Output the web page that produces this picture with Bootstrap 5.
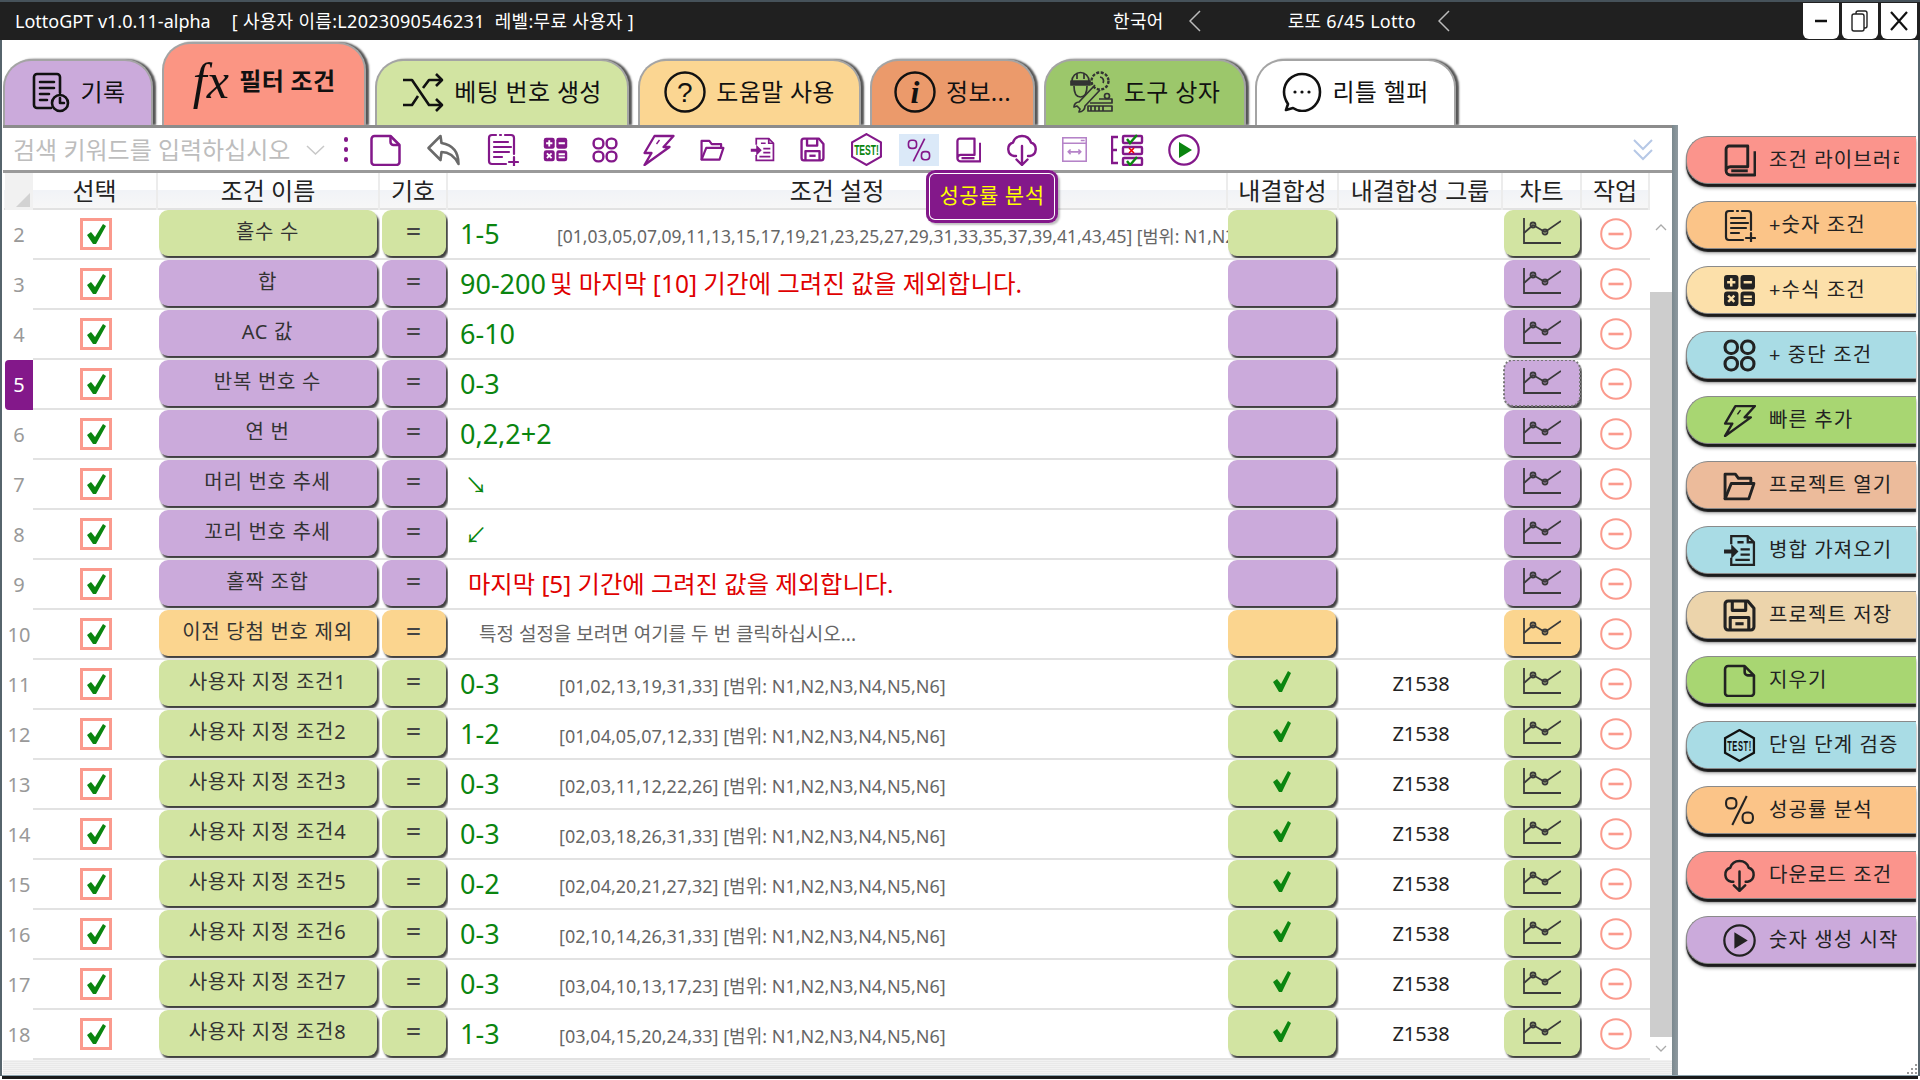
<!doctype html>
<html lang="ko">
<head>
<meta charset="utf-8">
<title>LottoGPT</title>
<link href="https://cdn.jsdelivr.net/npm/bootstrap@5.3.0/dist/css/bootstrap.min.css" rel="stylesheet">
<style>
html,body{margin:0;height:1080px;overflow:hidden;background:#fff}
body{font-family:"Noto Sans","Noto Sans CJK KR",sans-serif;color:#222;width:1920px}
.winbar{height:40px;background:#202020;border-top:2px solid #46525a;color:#fff;font-size:18px;padding-left:15px}
.winbar .vt{margin-left:21px;letter-spacing:.3px}
.lang1{margin-left:479px;letter-spacing:.3px}
.chev1{margin-left:25px}
.lang2{margin-left:87px;letter-spacing:.3px}
.chev2{margin-left:22px}
.winbtns{margin-left:auto;padding-right:3px;gap:3px;align-self:flex-start;margin-top:1px}
.wbtn{width:36px;height:36px;background:#fff;border:0;border-radius:0 0 6px 6px;padding:0;color:#111;display:flex;align-items:center;justify-content:center}
.bodyarea{height:1036px;border-left:2px solid #56646c;border-right:2px solid #56646c}
.tabstrip{height:85px;padding-left:1px;gap:9px;align-items:flex-end;overflow:hidden}
.tabx{height:66px;border-radius:28px 28px 0 0;border:2px solid #a4a4a4;border-bottom:0;box-shadow:3px 0 2px #555;color:#111;font-size:24px;letter-spacing:.3px;padding:0 0 2px;gap:10px;display:flex;align-items:center;justify-content:center}
.tabx svg{flex:none}
.t1{width:150px;background:#cbaadb}
.t2{width:204px;height:83px;background:#fb9583;font-weight:700;padding:0 0 7px;gap:10px}
.t3{width:254px;background:#d2e4a2}
.t4{width:223px;background:#fbd692}
.t5{width:165px;background:#eb9a6b}
.t6{width:202px;background:#9cc76b}
.t7{width:201px;background:#fff}
.fxmark{font-family:"Liberation Serif",serif;font-style:italic;font-weight:400;font-size:50px;line-height:1}
.workarea{height:950px;margin-left:1px}
.mainpane{width:1669px;flex:none}
.toolrow{height:48px;border-top:3px solid #8c8c8c;border-bottom:3px solid #9a9a9a;padding:1px 0 0 10px;color:#83188a;--hole:#fff;background:#fff}
.srch{width:281px;overflow:hidden;white-space:nowrap;font-size:24px;color:#bdbdbd}
.srchchev{margin-left:12px}
.kebab{margin-left:19px;margin-right:21px;width:4px;gap:5px}
.kebab i{display:block;width:4px;height:5px;border-radius:2px;background:#83188a}
.toolset{gap:24.3px}
.toolset svg{display:block;flex:none}
.pctwrap{position:relative;width:40px;height:32px;margin:0 -8px;background:#dbe9f8;display:flex;align-items:center;justify-content:center}
.hint-pop{position:absolute;left:27px;top:36px;width:132px;height:53px;background:#83188a;border-radius:9px;box-shadow:inset 0 0 0 3px #83188a,inset 0 0 0 4px #fff,2px 2px 2px rgba(0,0,0,.25);color:#ff0;font-size:21px;display:flex;align-items:center;justify-content:center;white-space:nowrap;z-index:5;letter-spacing:.5px}
.morechev{margin-left:auto;margin-right:18px}
.midarea{height:887px;padding-left:1px}
.gridbox{width:1646px;flex:none}
.grow,.ghead{display:grid;grid-template-columns:29px 125px 222px 68px 780px 111px 164px 79px 68px}
.ghead{height:37px;background:linear-gradient(#fff 0,#fff 48%,#f1f3f7 50%,#f7f7f7 100%);border-bottom:2px solid #e2e2e2;font-size:24px;color:#222}
.ghead>div{display:flex;align-items:center;justify-content:center;border-right:2px solid #ececec;padding-bottom:1px;white-space:nowrap}
.ghead .corner{background:#f1f1f1;align-items:flex-end;justify-content:flex-end;padding:0 3px 3px 0;border-right:0;margin-left:1px}
.grow{height:50px}
.grow>div{display:flex;align-items:center;justify-content:center;overflow:hidden;border-bottom:2px solid #e2e2e2}
.grow>.rnum{border-bottom:0;color:#999;font-size:20px;margin:0 0 0 1px;padding-left:0}
.grow>.rnum.hot{background:#83188a;color:#fff;border-radius:4px 0 0 4px;font-size:20px;margin-bottom:0}
.cbtn{border:0;border-radius:9px;padding:0 0 2px;height:46px;font-size:20px;color:#333;box-shadow:2px 3px 2px rgba(30,30,30,.85);background:var(--tone);white-space:nowrap;display:flex;align-items:center;justify-content:center;margin-bottom:3px;letter-spacing:.7px;flex:none}
.cbtn:hover{background:var(--tone);color:#333}
.tg{--tone:#d2e4a2}
.tp{--tone:#cbaadb}
.ty{--tone:#fbd58f}
.namebtn{width:218px;margin-right:3px}
.symbtn{width:64px;font-size:27px;color:#444;letter-spacing:0;margin-left:1px;margin-right:2px}
.fitbtn{width:108px;margin-right:4px;padding-bottom:4px}
.chartbtn{width:76px;padding:0 0 3px;margin-right:2px}
.chartbtn.focusdot{outline:2px dotted #777;outline-offset:-1px}
.grow>.valcell{justify-content:flex-start;padding:0 0 0 12px;white-space:nowrap;font-size:27px;color:#0a850f}
.vnum{width:97px;flex:none}
.vnum2{width:99px;flex:none}
.vdet{font-size:18px;color:#666;letter-spacing:0;padding-top:5px}
.vdet2{font-size:17.5px}
.vred{color:#e00000;font-size:24.5px;padding-left:4px}
.vred9{padding-left:8px;font-size:24.3px}
.vgray{padding-left:19px;font-size:19px;color:#666}
.varrow{padding-left:5px;font-size:22px}
.grpcell{font-size:20px;color:#222}
.sbar{width:22px;flex:none;padding-top:37px}
.sbtop{height:82px;padding-top:14px;text-align:center;color:#aaa}
.sbthumb{height:745px;background:#cdcdcd}
.sbbot{height:23px;text-align:center}
.footstrip{height:15px;background:repeating-linear-gradient(#f2f2f2 0,#f2f2f2 1px,#e9e9e9 1px,#e9e9e9 2px)}
.splitbar{width:6px;flex:none;background:linear-gradient(90deg,#7a888e,#8f9aa0)}
.rightpane{flex:1 1 auto;padding:11px 0 0 8px;gap:17px;overflow:hidden;background:#fff;position:relative}
.rbtn{width:230px;height:48px;border:1px solid #8a8a8a;border-right:0;border-radius:22px 0 0 22px;box-shadow:0 3px 1px #1c1c1c,0 5px 3px rgba(0,0,0,.25);padding:0 0 0 36px;font-size:20px;color:#222;display:flex;align-items:center;justify-content:flex-start;gap:13px;letter-spacing:1.1px;background:var(--tone);white-space:nowrap;text-align:left;flex:none}
.rbtn:hover{background:var(--tone);color:#222}
.rbtn svg{flex:none}
.rlabel{width:130px;overflow:hidden;display:block}
.rred{--tone:#fb948c;--hole:#fb948c}
.rora{--tone:#fbc488;--hole:#fbc488}
.ryel{--tone:#fce0aa;--hole:#fce0aa}
.rblu{--tone:#a9dce5;--hole:#a9dce5}
.rgrn{--tone:#a8d672;--hole:#a8d672}
.rsal{--tone:#ecbb9b;--hole:#ecbb9b}
.rtan{--tone:#ecd4ab;--hole:#ecd4ab}
.rpur{--tone:#cbaadb;--hole:#cbaadb}
.botline{height:1px;background:#8aa2ad}
.botdark{height:3px;background:#1a1a1a}
.grip{position:absolute;right:0;bottom:0;width:12px;height:12px}
svg text{font-family:"Liberation Sans",sans-serif}
</style>
</head>
<body>
<svg width="0" height="0" class="position-absolute">
<defs>
<symbol id="i-doc" viewBox="0 0 32 32"><g fill="none" stroke="currentColor" stroke-width="2.5" stroke-linejoin="round"><path d="M2 5a3 3 0 0 1 3-3h16l9 9v17a3 3 0 0 1-3 3H5a3 3 0 0 1-3-3z"/><path d="M21 2v6a3 3 0 0 0 3 3h6"/></g></symbol>
<symbol id="i-reply" viewBox="0 0 34 32"><path d="M14 2 2 14l12 12 1-8c7 0 13 4 17 12 0-11-5-19-17-21z" fill="none" stroke="#6a6a6a" stroke-width="2.600" stroke-linejoin="round"/></symbol>
<symbol id="i-numdoc" viewBox="0 0 33 33"><g fill="none" stroke="currentColor" stroke-width="2.2" stroke-linecap="round"><path d="M10 2H6a3 3 0 0 0-3 3v23a3 3 0 0 0 3 3h14"/><path d="M14 2h1M19 2h6a3 3 0 0 1 3 3v16"/><path d="M8 9h14M8 14h17M8 19h15M8 24h8"/><path d="M28 24v9M23 29h9"/></g></symbol>
<symbol id="i-calc" viewBox="0 0 32 32"><g fill="currentColor"><rect x="1" y="1" width="14" height="14" rx="3"/><rect x="17" y="1" width="14" height="14" rx="3"/><rect x="1" y="17" width="14" height="14" rx="3"/><rect x="17" y="17" width="14" height="14" rx="3"/></g><g stroke="var(--hole,#fff)" stroke-width="2.4" fill="none"><path d="M8 4v8M4 8h8M20 8h8M5 21l6 6M11 21l-6 6M20 22h8M20 26h8"/></g></symbol>
<symbol id="i-four" viewBox="0 0 32 32"><g fill="none" stroke="currentColor" stroke-width="3"><rect x="2" y="2" width="12" height="12" rx="5.5"/><rect x="18" y="2" width="12" height="12" rx="5.5"/><rect x="2" y="18" width="12" height="12" rx="5.5"/><rect x="18" y="18" width="12" height="12" rx="5.5"/></g></symbol>
<symbol id="i-bolt" viewBox="0 0 32 32"><g fill="none" stroke="currentColor" stroke-width="2.3" stroke-linejoin="round"><path d="M12 2h19L21 13h6L2 31l7-12H2z"/><path d="M14 10l3-4" stroke-width="1.4"/></g></symbol>
<symbol id="i-folder" viewBox="0 0 32 32"><g fill="none" stroke="currentColor" stroke-width="2.8" stroke-linejoin="round"><path d="M2 29V5h10l3 4h12v5"/><path d="M2 29h23l5-15H8z"/></g></symbol>
<symbol id="i-import" viewBox="0 0 32 32"><g fill="none" stroke="currentColor" stroke-width="2.2"><path d="M8 10V2h16l6 6v22H8v-7"/><path d="M24 2v6h6M14 8h6M17 15h9M17 20h9M12 25h14"/></g><path d="M1 15h7v-5l7 7-7 7v-5H1z" fill="currentColor"/></symbol>
<symbol id="i-floppy" viewBox="0 0 32 32"><g fill="none" stroke="currentColor" stroke-width="3" stroke-linejoin="round"><path d="M2 5a3 3 0 0 1 3-3h19l6 7v18a3 3 0 0 1-3 3H5a3 3 0 0 1-3-3z"/><path d="M9 2v9h13V2M7 30V18h18v12"/><path d="M12 24h8"/></g></symbol>
<symbol id="i-pct" viewBox="0 0 32 32"><g fill="none" stroke="currentColor" stroke-width="2"><rect x="3" y="4" width="10" height="10" rx="4"/><rect x="19" y="18" width="10" height="10" rx="4"/><path d="M23 2 9 30"/></g></symbol>
<symbol id="i-book" viewBox="0 0 32 32"><g fill="none" stroke="currentColor" stroke-width="2.8" stroke-linejoin="round"><path d="M3 26V5a3 3 0 0 1 3-3h18v20H7a4 4 0 0 0-4 4 4 4 0 0 0 4 4h24V7"/><path d="M8 26h16"/></g></symbol>
<symbol id="i-cloud" viewBox="0 0 32 32"><g fill="none" stroke="currentColor" stroke-width="2.4" stroke-linecap="round" stroke-linejoin="round"><path d="M10 22H8A7 7 0 0 1 7 8.500a9.500 9.500 0 0 1 18 0A7 7 0 0 1 24 22h-2"/><path d="M16 12v19M10.500 25.500 16 31l5.500-5.500"/></g></symbol>
<symbol id="i-window" viewBox="0 0 32 32"><g fill="none" stroke="#b583c8" stroke-width="2"><rect x="1" y="1" width="30" height="30"/><path d="M1 8h30M24 4.500h5M8 19h16M11 16l-3 3 3 3M21 16l3 3-3 3"/></g></symbol>
<symbol id="i-check" viewBox="0 0 33 32"><g fill="none" stroke="#83188a" stroke-width="2.4"><path d="M7 3H1v26h6M1 16h5"/><rect x="12" y="2" width="19" height="7" rx="1"/><rect x="12" y="13" width="19" height="7" rx="1"/><rect x="12" y="24" width="19" height="7" rx="1"/></g><path d="M16 5l3 4 7-8" fill="none" stroke="#0a850f" stroke-width="2.4"/><path d="M18 14l5 5M23 14l-5 5" stroke="#e00" stroke-width="1.6"/><path d="M16 27l3 4 7-8" fill="none" stroke="#0a850f" stroke-width="2.4"/></symbol>
<symbol id="i-play" viewBox="0 0 32 32"><circle cx="16" cy="16" r="14.700" fill="none" stroke="currentColor" stroke-width="2.2"/><path d="M11 8v16l13-8z" fill="var(--playc,currentColor)"/></symbol>
<symbol id="i-hist" viewBox="0 0 40 41"><g fill="none" stroke="currentColor" stroke-width="2.6" stroke-linecap="round" stroke-linejoin="round"><path d="M20 36H6a3 3 0 0 1-3-3V5a3 3 0 0 1 3-3h20a3 3 0 0 1 3 3v16"/><path d="M9 10h14M9 16h14M9 22h9M9 28h7"/><circle cx="29" cy="31" r="8"/><path d="M29 26v5h4"/></g></symbol>
<symbol id="i-shuf" viewBox="0 0 42 40"><g fill="none" stroke="currentColor" stroke-width="2.6" stroke-linejoin="round"><path d="M1 8h9l17 25h12"/><path d="M1 33h9l6-9M21 16l6-8h12"/><path d="M34 2l6 6-6 6M34 27l6 6-6 6"/></g></symbol>
<symbol id="i-tools" viewBox="0 0 44 42"><g fill="none" stroke="#333" stroke-width="1.700" stroke-linejoin="round"><path d="M2 10a8.500 8.500 0 0 1 17 0"/><path d="M1 10h19v4H1z" fill="#333"/><path d="M7 2v6M14 2v6"/><path d="M4 15c0 8 3 11 6.500 11s6.500-3 6.500-11"/><circle cx="30" cy="10" r="8.500" stroke-dasharray="3 1.500" stroke-width="2.400"/><path d="M25 14 9 31a5 5 0 0 0-5 5l3-1 3 3-1 3a6 6 0 0 0 6-6l15-16"/><path d="M30 6a4 4 0 0 1 3 6"/><circle cx="37" cy="25" r="2.500"/><path d="M29 28h13v4H20"/><path d="M18 35h24v5H18zM21 35v5M25 35v5M29 35v5M33 35v5"/></g></symbol>
<symbol id="i-chat" viewBox="0 0 40 40"><path d="M20 2C10 2 2 10 2 20c0 5 2 9 4 12l-2 6 7-2c3 2 6 3 9 3 10 0 18-8 18-19S30 2 20 2z" fill="none" stroke="currentColor" stroke-width="2.600" stroke-linejoin="round"/><g fill="currentColor"><circle cx="13" cy="20" r="1.600"/><circle cx="20" cy="20" r="1.600"/><circle cx="27" cy="20" r="1.600"/></g></symbol>
<symbol id="i-chart" viewBox="0 0 38 26"><g fill="none" stroke="#3a3a3a" stroke-width="1.800"><path d="M1 0v25h37"/><path d="M1 15 10 7 22 14 38 3"/><circle cx="10" cy="7" r="2.500"/><circle cx="22" cy="14" r="2.500"/></g></symbol>
<symbol id="i-minus" viewBox="0 0 32 32"><circle cx="16" cy="16" r="14.800" fill="#fff" stroke="#fb9a8d" stroke-width="2"/><path d="M8.500 16h15" stroke="#fb9a8d" stroke-width="2.600"/></symbol>
<symbol id="i-chk" viewBox="0 0 32 32"><rect x="1.500" y="1.500" width="29" height="29" fill="#fff" stroke="#fb9a8d" stroke-width="3"/><path d="M7 17l4-3 4 5L23 6l3 2-10 18h-3z" fill="#0a850f"/></symbol>
<symbol id="i-ok" viewBox="0 0 24 24"><path d="M3 13l4-3 4 5L18 2l3 2-9 19H9z" fill="#0a850f"/></symbol>
<symbol id="i-chev" viewBox="0 0 12 22"><path d="M11 1 1 11l10 10" fill="none" stroke="#bbb" stroke-width="1.500"/></symbol>
</defs>
</svg>

<header class="winbar d-flex align-items-center">
<span>LottoGPT v1.0.11-alpha</span><span class="vt">[ 사용자 이름:L2023090546231&nbsp; 레벨:무료 사용자 ]</span>
<span class="lang1">한국어</span><svg class="chev1" width="12" height="22"><use href="#i-chev"/></svg>
<span class="lang2">로또 6/45 Lotto</span><svg class="chev2" width="12" height="22"><use href="#i-chev"/></svg>
<div class="winbtns d-flex">
<button class="wbtn" aria-label="min"><svg width="14" height="14"><path d="M1 7h12" stroke="#111" stroke-width="2.500"/></svg></button>
<button class="wbtn" aria-label="max"><svg width="20" height="24"><g fill="#fff" stroke="#222" stroke-width="1.400"><rect x="6" y="2" width="11" height="17" rx="2"/><rect x="2" y="5" width="12" height="17" rx="2"/></g></svg></button>
<button class="wbtn" aria-label="close"><svg width="20" height="22"><path d="M2 2l16 18M18 2 2 20" stroke="#111" stroke-width="2.200"/></svg></button>
</div>
</header>

<div class="bodyarea">
<nav class="nav tabstrip d-flex">
<a class="nav-link tabx t1"><svg width="40" height="41"><use href="#i-hist"/></svg><span>기록</span></a>
<a class="nav-link tabx t2"><span class="fxmark">fx</span><span>필터 조건</span></a>
<a class="nav-link tabx t3"><svg width="42" height="40"><use href="#i-shuf"/></svg><span>베팅 번호 생성</span></a>
<a class="nav-link tabx t4"><svg width="42" height="42"><circle cx="21" cy="21" r="19.500" fill="none" stroke="#111" stroke-width="2.400"/><text x="21" y="31" text-anchor="middle" font-size="28" fill="#111">?</text></svg><span>도움말 사용</span></a>
<a class="nav-link tabx t5"><svg width="42" height="42"><circle cx="21" cy="21" r="19.500" fill="none" stroke="#111" stroke-width="2.400"/><text x="21" y="32" text-anchor="middle" font-size="32" fill="#111" font-style="italic" font-weight="700" style="font-family:'Liberation Serif',serif">i</text></svg><span>정보...</span></a>
<a class="nav-link tabx t6"><svg width="44" height="42"><use href="#i-tools"/></svg><span>도구 상자</span></a>
<a class="nav-link tabx t7"><svg width="40" height="40"><use href="#i-chat"/></svg><span>리틀 헬퍼</span></a>
</nav>

<div class="workarea d-flex">
<main class="mainpane">
<div class="toolrow d-flex align-items-center">
<span class="srch">검색 키워드를 입력하십시오</span>
<svg class="srchchev" width="19" height="10"><path d="M1 1l8.500 8L18 1" fill="none" stroke="#c8c8c8" stroke-width="1.500"/></svg>
<span class="kebab d-flex flex-column"><i></i><i></i><i></i></span>
<div class="toolset d-flex align-items-center">
<svg width="33" height="32"><use href="#i-doc"/></svg>
<svg width="35" height="32"><use href="#i-reply"/></svg>
<svg width="33" height="33"><use href="#i-numdoc"/></svg>
<svg width="25" height="25"><use href="#i-calc"/></svg>
<svg width="26" height="26"><use href="#i-four"/></svg>
<svg width="33" height="32"><use href="#i-bolt"/></svg>
<svg width="25" height="25"><use href="#i-folder"/></svg>
<svg width="27" height="25"><use href="#i-import"/></svg>
<svg width="25" height="25"><use href="#i-floppy"/></svg>
<svg width="33" height="33" viewBox="0 0 32 32"><path d="M16 1 30 9v14l-14 8-14-8V9z" fill="none" stroke="#83188a" stroke-width="2"/><text x="16" y="21.500" text-anchor="middle" font-size="14" font-weight="700" fill="#0a850f" textLength="24" lengthAdjust="spacingAndGlyphs">TEST!</text></svg>
<div class="pctwrap"><svg width="26" height="26"><use href="#i-pct"/></svg><div class="hint-pop">성공률 분석</div></div>
<svg width="26" height="26"><use href="#i-book"/></svg>
<svg width="32" height="32"><use href="#i-cloud"/></svg>
<svg width="25" height="25"><use href="#i-window"/></svg>
<svg width="33" height="32"><use href="#i-check"/></svg>
<svg width="32" height="32" style="--playc:#0a850f"><use href="#i-play"/></svg>
</div>
<svg class="morechev" width="22" height="24"><path d="M2 2l9 9 9-9M2 12l9 9 9-9" fill="none" stroke="#b6c8e6" stroke-width="2"/></svg>
</div>

<div class="midarea d-flex">
<div class="gridbox">
<div class="ghead">
<div class="corner"><svg width="14" height="14"><path d="M14 0v14H0z" fill="#d2d2d2"/></svg></div>
<div>선택</div><div>조건 이름</div><div>기호</div><div>조건 설정</div><div>내결합성</div><div>내결합성 그룹</div><div>차트</div><div>작업</div>
</div>

<div class="grow tg"><div class="rnum">2</div><div><svg width="32" height="32"><use href="#i-chk"/></svg></div><div><button class="btn cbtn namebtn">홀수 수</button></div><div><button class="btn cbtn symbtn">=</button></div><div class="valcell"><span class="vnum">1-5</span><span class="vdet vdet2">[01,03,05,07,09,11,13,15,17,19,21,23,25,27,29,31,33,35,37,39,41,43,45] [범위: N1,N2,N3,N4,N5,N6]</span></div><div><button class="btn cbtn fitbtn" aria-label="fit"></button></div><div class="grpcell"></div><div><button class="btn cbtn chartbtn" aria-label="chart"><svg width="38" height="26"><use href="#i-chart"/></svg></button></div><div><svg width="32" height="32"><use href="#i-minus"/></svg></div></div>

<div class="grow tp"><div class="rnum">3</div><div><svg width="32" height="32"><use href="#i-chk"/></svg></div><div><button class="btn cbtn namebtn">합</button></div><div><button class="btn cbtn symbtn">=</button></div><div class="valcell"><span>90-200</span><span class="vred">및 마지막 [10] 기간에 그려진 값을 제외합니다.</span></div><div><button class="btn cbtn fitbtn" aria-label="fit"></button></div><div class="grpcell"></div><div><button class="btn cbtn chartbtn" aria-label="chart"><svg width="38" height="26"><use href="#i-chart"/></svg></button></div><div><svg width="32" height="32"><use href="#i-minus"/></svg></div></div>

<div class="grow tp"><div class="rnum">4</div><div><svg width="32" height="32"><use href="#i-chk"/></svg></div><div><button class="btn cbtn namebtn">AC 값</button></div><div><button class="btn cbtn symbtn">=</button></div><div class="valcell"><span>6-10</span></div><div><button class="btn cbtn fitbtn" aria-label="fit"></button></div><div class="grpcell"></div><div><button class="btn cbtn chartbtn" aria-label="chart"><svg width="38" height="26"><use href="#i-chart"/></svg></button></div><div><svg width="32" height="32"><use href="#i-minus"/></svg></div></div>

<div class="grow tp"><div class="rnum hot">5</div><div><svg width="32" height="32"><use href="#i-chk"/></svg></div><div><button class="btn cbtn namebtn">반복 번호 수</button></div><div><button class="btn cbtn symbtn">=</button></div><div class="valcell"><span>0-3</span></div><div><button class="btn cbtn fitbtn" aria-label="fit"></button></div><div class="grpcell"></div><div><button class="btn cbtn chartbtn focusdot" aria-label="chart"><svg width="38" height="26"><use href="#i-chart"/></svg></button></div><div><svg width="32" height="32"><use href="#i-minus"/></svg></div></div>

<div class="grow tp"><div class="rnum">6</div><div><svg width="32" height="32"><use href="#i-chk"/></svg></div><div><button class="btn cbtn namebtn">연 번</button></div><div><button class="btn cbtn symbtn">=</button></div><div class="valcell"><span>0,2,2+2</span></div><div><button class="btn cbtn fitbtn" aria-label="fit"></button></div><div class="grpcell"></div><div><button class="btn cbtn chartbtn" aria-label="chart"><svg width="38" height="26"><use href="#i-chart"/></svg></button></div><div><svg width="32" height="32"><use href="#i-minus"/></svg></div></div>

<div class="grow tp"><div class="rnum">7</div><div><svg width="32" height="32"><use href="#i-chk"/></svg></div><div><button class="btn cbtn namebtn">머리 번호 추세</button></div><div><button class="btn cbtn symbtn">=</button></div><div class="valcell"><span class="varrow">↘</span></div><div><button class="btn cbtn fitbtn" aria-label="fit"></button></div><div class="grpcell"></div><div><button class="btn cbtn chartbtn" aria-label="chart"><svg width="38" height="26"><use href="#i-chart"/></svg></button></div><div><svg width="32" height="32"><use href="#i-minus"/></svg></div></div>

<div class="grow tp"><div class="rnum">8</div><div><svg width="32" height="32"><use href="#i-chk"/></svg></div><div><button class="btn cbtn namebtn">꼬리 번호 추세</button></div><div><button class="btn cbtn symbtn">=</button></div><div class="valcell"><span class="varrow">↙</span></div><div><button class="btn cbtn fitbtn" aria-label="fit"></button></div><div class="grpcell"></div><div><button class="btn cbtn chartbtn" aria-label="chart"><svg width="38" height="26"><use href="#i-chart"/></svg></button></div><div><svg width="32" height="32"><use href="#i-minus"/></svg></div></div>

<div class="grow tp"><div class="rnum">9</div><div><svg width="32" height="32"><use href="#i-chk"/></svg></div><div><button class="btn cbtn namebtn">홀짝 조합</button></div><div><button class="btn cbtn symbtn">=</button></div><div class="valcell"><span class="vred vred9">마지막 [5] 기간에 그려진 값을 제외합니다.</span></div><div><button class="btn cbtn fitbtn" aria-label="fit"></button></div><div class="grpcell"></div><div><button class="btn cbtn chartbtn" aria-label="chart"><svg width="38" height="26"><use href="#i-chart"/></svg></button></div><div><svg width="32" height="32"><use href="#i-minus"/></svg></div></div>

<div class="grow ty"><div class="rnum">10</div><div><svg width="32" height="32"><use href="#i-chk"/></svg></div><div><button class="btn cbtn namebtn">이전 당첨 번호 제외</button></div><div><button class="btn cbtn symbtn">=</button></div><div class="valcell"><span class="vgray">특정 설정을 보려면 여기를 두 번 클릭하십시오...</span></div><div><button class="btn cbtn fitbtn" aria-label="fit"></button></div><div class="grpcell"></div><div><button class="btn cbtn chartbtn" aria-label="chart"><svg width="38" height="26"><use href="#i-chart"/></svg></button></div><div><svg width="32" height="32"><use href="#i-minus"/></svg></div></div>

<div class="grow tg"><div class="rnum">11</div><div><svg width="32" height="32"><use href="#i-chk"/></svg></div><div><button class="btn cbtn namebtn">사용자 지정 조건1</button></div><div><button class="btn cbtn symbtn">=</button></div><div class="valcell"><span class="vnum2">0-3</span><span class="vdet">[01,02,13,19,31,33] [범위: N1,N2,N3,N4,N5,N6]</span></div><div><button class="btn cbtn fitbtn" aria-label="fit"><svg width="24" height="24"><use href="#i-ok"/></svg></button></div><div class="grpcell">Z1538</div><div><button class="btn cbtn chartbtn" aria-label="chart"><svg width="38" height="26"><use href="#i-chart"/></svg></button></div><div><svg width="32" height="32"><use href="#i-minus"/></svg></div></div>

<div class="grow tg"><div class="rnum">12</div><div><svg width="32" height="32"><use href="#i-chk"/></svg></div><div><button class="btn cbtn namebtn">사용자 지정 조건2</button></div><div><button class="btn cbtn symbtn">=</button></div><div class="valcell"><span class="vnum2">1-2</span><span class="vdet">[01,04,05,07,12,33] [범위: N1,N2,N3,N4,N5,N6]</span></div><div><button class="btn cbtn fitbtn" aria-label="fit"><svg width="24" height="24"><use href="#i-ok"/></svg></button></div><div class="grpcell">Z1538</div><div><button class="btn cbtn chartbtn" aria-label="chart"><svg width="38" height="26"><use href="#i-chart"/></svg></button></div><div><svg width="32" height="32"><use href="#i-minus"/></svg></div></div>

<div class="grow tg"><div class="rnum">13</div><div><svg width="32" height="32"><use href="#i-chk"/></svg></div><div><button class="btn cbtn namebtn">사용자 지정 조건3</button></div><div><button class="btn cbtn symbtn">=</button></div><div class="valcell"><span class="vnum2">0-3</span><span class="vdet">[02,03,11,12,22,26] [범위: N1,N2,N3,N4,N5,N6]</span></div><div><button class="btn cbtn fitbtn" aria-label="fit"><svg width="24" height="24"><use href="#i-ok"/></svg></button></div><div class="grpcell">Z1538</div><div><button class="btn cbtn chartbtn" aria-label="chart"><svg width="38" height="26"><use href="#i-chart"/></svg></button></div><div><svg width="32" height="32"><use href="#i-minus"/></svg></div></div>

<div class="grow tg"><div class="rnum">14</div><div><svg width="32" height="32"><use href="#i-chk"/></svg></div><div><button class="btn cbtn namebtn">사용자 지정 조건4</button></div><div><button class="btn cbtn symbtn">=</button></div><div class="valcell"><span class="vnum2">0-3</span><span class="vdet">[02,03,18,26,31,33] [범위: N1,N2,N3,N4,N5,N6]</span></div><div><button class="btn cbtn fitbtn" aria-label="fit"><svg width="24" height="24"><use href="#i-ok"/></svg></button></div><div class="grpcell">Z1538</div><div><button class="btn cbtn chartbtn" aria-label="chart"><svg width="38" height="26"><use href="#i-chart"/></svg></button></div><div><svg width="32" height="32"><use href="#i-minus"/></svg></div></div>

<div class="grow tg"><div class="rnum">15</div><div><svg width="32" height="32"><use href="#i-chk"/></svg></div><div><button class="btn cbtn namebtn">사용자 지정 조건5</button></div><div><button class="btn cbtn symbtn">=</button></div><div class="valcell"><span class="vnum2">0-2</span><span class="vdet">[02,04,20,21,27,32] [범위: N1,N2,N3,N4,N5,N6]</span></div><div><button class="btn cbtn fitbtn" aria-label="fit"><svg width="24" height="24"><use href="#i-ok"/></svg></button></div><div class="grpcell">Z1538</div><div><button class="btn cbtn chartbtn" aria-label="chart"><svg width="38" height="26"><use href="#i-chart"/></svg></button></div><div><svg width="32" height="32"><use href="#i-minus"/></svg></div></div>

<div class="grow tg"><div class="rnum">16</div><div><svg width="32" height="32"><use href="#i-chk"/></svg></div><div><button class="btn cbtn namebtn">사용자 지정 조건6</button></div><div><button class="btn cbtn symbtn">=</button></div><div class="valcell"><span class="vnum2">0-3</span><span class="vdet">[02,10,14,26,31,33] [범위: N1,N2,N3,N4,N5,N6]</span></div><div><button class="btn cbtn fitbtn" aria-label="fit"><svg width="24" height="24"><use href="#i-ok"/></svg></button></div><div class="grpcell">Z1538</div><div><button class="btn cbtn chartbtn" aria-label="chart"><svg width="38" height="26"><use href="#i-chart"/></svg></button></div><div><svg width="32" height="32"><use href="#i-minus"/></svg></div></div>

<div class="grow tg"><div class="rnum">17</div><div><svg width="32" height="32"><use href="#i-chk"/></svg></div><div><button class="btn cbtn namebtn">사용자 지정 조건7</button></div><div><button class="btn cbtn symbtn">=</button></div><div class="valcell"><span class="vnum2">0-3</span><span class="vdet">[03,04,10,13,17,23] [범위: N1,N2,N3,N4,N5,N6]</span></div><div><button class="btn cbtn fitbtn" aria-label="fit"><svg width="24" height="24"><use href="#i-ok"/></svg></button></div><div class="grpcell">Z1538</div><div><button class="btn cbtn chartbtn" aria-label="chart"><svg width="38" height="26"><use href="#i-chart"/></svg></button></div><div><svg width="32" height="32"><use href="#i-minus"/></svg></div></div>

<div class="grow tg"><div class="rnum">18</div><div><svg width="32" height="32"><use href="#i-chk"/></svg></div><div><button class="btn cbtn namebtn">사용자 지정 조건8</button></div><div><button class="btn cbtn symbtn">=</button></div><div class="valcell"><span class="vnum2">1-3</span><span class="vdet">[03,04,15,20,24,33] [범위: N1,N2,N3,N4,N5,N6]</span></div><div><button class="btn cbtn fitbtn" aria-label="fit"><svg width="24" height="24"><use href="#i-ok"/></svg></button></div><div class="grpcell">Z1538</div><div><button class="btn cbtn chartbtn" aria-label="chart"><svg width="38" height="26"><use href="#i-chart"/></svg></button></div><div><svg width="32" height="32"><use href="#i-minus"/></svg></div></div>
</div>

<div class="sbar d-flex flex-column">
<div class="sbtop"><svg width="12" height="7" class="d-block mx-auto"><path d="M1 6l5-5 5 5" fill="none" stroke="#aaa" stroke-width="1.300"/></svg></div>
<div class="sbthumb"></div>
<div class="sbbot d-flex align-items-center justify-content-center"><svg width="12" height="7"><path d="M1 1l5 5 5-5" fill="none" stroke="#aaa" stroke-width="1.300"/></svg></div>
</div>
</div>
<div class="footstrip"></div>
</main>
<div class="splitbar"></div>
<aside class="rightpane d-flex flex-column">
<button class="btn rbtn rred"><svg width="33" height="33"><use href="#i-book"/></svg><span class="rlabel">조건 라이브러리</span></button>
<button class="btn rbtn rora"><svg width="33" height="33"><use href="#i-numdoc"/></svg><span class="rlabel">+숫자 조건</span></button>
<button class="btn rbtn ryel"><svg width="33" height="33"><use href="#i-calc"/></svg><span class="rlabel">+수식 조건</span></button>
<button class="btn rbtn rblu"><svg width="33" height="33"><use href="#i-four"/></svg><span class="rlabel">+ 중단 조건</span></button>
<button class="btn rbtn rgrn"><svg width="33" height="33"><use href="#i-bolt"/></svg><span class="rlabel">빠른 추가</span></button>
<button class="btn rbtn rsal"><svg width="33" height="33"><use href="#i-folder"/></svg><span class="rlabel">프로젝트 열기</span></button>
<button class="btn rbtn rblu"><svg width="33" height="33"><use href="#i-import"/></svg><span class="rlabel">병합 가져오기</span></button>
<button class="btn rbtn rtan"><svg width="33" height="33"><use href="#i-floppy"/></svg><span class="rlabel">프로젝트 저장</span></button>
<button class="btn rbtn rgrn"><svg width="33" height="33"><use href="#i-doc"/></svg><span class="rlabel">지우기</span></button>
<button class="btn rbtn rblu"><svg width="33" height="33" viewBox="0 0 32 32"><path d="M16 1 30 9v14l-14 8-14-8V9z" fill="none" stroke="#111" stroke-width="2.200"/><text x="16" y="21" text-anchor="middle" font-size="13.500" font-weight="700" fill="#111" textLength="24" lengthAdjust="spacingAndGlyphs">TEST!</text></svg><span class="rlabel">단일 단계 검증</span></button>
<button class="btn rbtn rora"><svg width="33" height="33"><use href="#i-pct"/></svg><span class="rlabel">성공률 분석</span></button>
<button class="btn rbtn rred"><svg width="33" height="33"><use href="#i-cloud"/></svg><span class="rlabel">다운로드 조건</span></button>
<button class="btn rbtn rpur"><svg width="33" height="33"><use href="#i-play"/></svg><span class="rlabel">숫자 생성 시작</span></button>
<svg class="grip" viewBox="0 0 12 12"><g fill="#9a9a9a"><rect x="9" y="1" width="2" height="2"/><rect x="5" y="5" width="2" height="2"/><rect x="9" y="5" width="2" height="2"/><rect x="1" y="9" width="2" height="2"/><rect x="5" y="9" width="2" height="2"/><rect x="9" y="9" width="2" height="2"/></g></svg>
</aside>
</div>
<div class="botline"></div>
<div class="botdark"></div>
</div>
</body>
</html>
